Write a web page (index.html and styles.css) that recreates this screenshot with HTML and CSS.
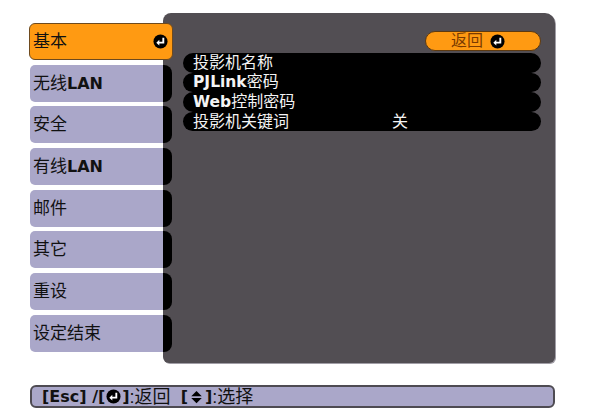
FILE: index.html
```html
<!DOCTYPE html>
<html lang="zh">
    <head>
        <meta charset="UTF-8" />
        <title>网络设置</title>
        <link rel="stylesheet" href="styles.css">
    </head>
    <body>
        <div class="screen">
            <div class="main">
                <!-- Left menu -->
                <div class="menu">
                    <div class="item active">
                        <span>基本</span>
                        <svg class="enter" viewBox="0 0 16 16"><circle cx="8" cy="8" r="7.5" fill="#000"/><path d="M11 4v5.2H6" stroke="#fff" stroke-width="2" fill="none"/><path d="M3.5 9.2l3.2-3v6z" fill="#fff"/></svg>
                    </div>
                    <div class="item"><span>无线<b>LAN</b></span></div>
                    <div class="item"><span>安全</span></div>
                    <div class="item"><span>有线<b>LAN</b></span></div>
                    <div class="item"><span>邮件</span></div>
                    <div class="item"><span>其它</span></div>
                    <div class="item"><span>重设</span></div>
                    <div class="item"><span>设定结束</span></div>
                </div>

                <!-- Settings panel -->
                <div class="panel">
                    <div class="back">
                        <span>返回</span>
                        <svg class="enter" viewBox="0 0 16 16"><circle cx="8" cy="8" r="7.5" fill="#000"/><path d="M11 4v5.2H6" stroke="#fff" stroke-width="2" fill="none"/><path d="M3.5 9.2l3.2-3v6z" fill="#fff"/></svg>
                    </div>
                    <div class="rows">
                        <div class="row"><span class="label">投影机名称</span></div>
                        <div class="row"><span class="label"><b>PJLink</b>密码</span></div>
                        <div class="row"><span class="label"><b>Web</b>控制密码</span></div>
                        <div class="row"><span class="label">投影机关键词</span><span class="value">关</span></div>
                    </div>
                </div>
            </div>

            <!-- Help bar -->
            <div class="help">
                <b>[Esc] /[</b><svg class="enter" viewBox="0 0 16 16"><circle cx="8" cy="8" r="7.5" fill="#000"/><path d="M11 4v5.2H6" stroke="#fff" stroke-width="2" fill="none"/><path d="M3.5 9.2l3.2-3v6z" fill="#fff"/></svg><b>]</b>:返回
                <b class="sel">[</b><svg class="updown" viewBox="0 0 14 16"><path d="M7 1l6 6H1z" fill="#000"/><path d="M7 15l6-6H1z" fill="#000"/></svg><b>]</b>:选择
            </div>
        </div>
    </body>
</html>
```

FILE: styles.css
```css
body {
    margin: 0;
    background-color: #ffffff;
    font-family: "Liberation Sans", "Noto Sans CJK SC", sans-serif;
    font-size: 17px;
}

b {
    font-family: "DejaVu Sans", "Noto Sans CJK SC", sans-serif;
    font-weight: bold;
}

.screen {
    width: 600px;
    height: 415px;
    padding: 13px 0 0 30px;
    box-sizing: border-box;
}

.main {
    display: flex;
}

.menu {
    width: 133px;
    padding-top: 10px;
    display: flex;
    flex-direction: column;
    gap: 4.7px;
}

.item {
    position: relative;
    height: 37px;
    box-sizing: border-box;
    padding-left: 3px;
    display: flex;
    align-items: center;
    justify-content: space-between;
    background-color: #aaa7c9;
    border-radius: 5px 0 0 5px;
    color: #111111;
    line-height: 1;
}

.item b {
    font-size: 16px;
}

.item::after {
    content: "";
    position: absolute;
    right: -9px;
    top: 0;
    width: 9px;
    height: 37px;
    background-color: #000000;
    border-radius: 0 8px 8px 0;
    z-index: 2;
}

.item.active {
    margin-right: -10px;
    margin-left: -1px;
    padding-right: 4px;
    background-color: #ff9a12;
    border: 1px solid #6e4a1e;
    border-radius: 6px;
    z-index: 3;
}

.item.active::after {
    display: none;
}

.enter {
    width: 15px;
    height: 15px;
    flex-shrink: 0;
}

.panel {
    width: 392px;
    height: 350px;
    box-sizing: border-box;
    padding: 18px 14px 0 20px;
    background-color: #524e53;
    border-radius: 8px 10px 6px 6px;
    box-shadow: 1px 1px 0 #a19ea6;
}

.back {
    width: 116px;
    height: 20px;
    margin-left: auto;
    box-sizing: border-box;
    display: flex;
    align-items: center;
    justify-content: center;
    gap: 7px;
    padding-right: 10px;
    background-color: #ff9a12;
    border: 1px solid #5e3a10;
    border-radius: 10px;
    color: #7a3a00;
    font-size: 16px;
    line-height: 1;
}

.rows {
    margin-top: 2px;
}

.row {
    height: 19.6px;
    display: flex;
    align-items: center;
    padding-left: 10px;
    background-color: #000000;
    border-radius: 10px;
    color: #f4f4f4;
    font-size: 16px;
    line-height: 1;
}

.row b {
    font-size: 15.5px;
}

.label {
    width: 199px;
}

.help {
    width: 525px;
    height: 23px;
    margin-top: 22px;
    box-sizing: border-box;
    padding-left: 10px;
    display: flex;
    align-items: center;
    background-color: #aaa7c9;
    border: 2px solid #4e4b52;
    border-radius: 6px;
    color: #111111;
    font-size: 18px;
    line-height: 1;
}

.help b {
    font-size: 16px;
}

.help .enter {
    margin: 0 1px;
}

.help .sel {
    margin-left: 10px;
}

.updown {
    width: 13px;
    height: 14px;
    margin: 0 2px;
}
```
